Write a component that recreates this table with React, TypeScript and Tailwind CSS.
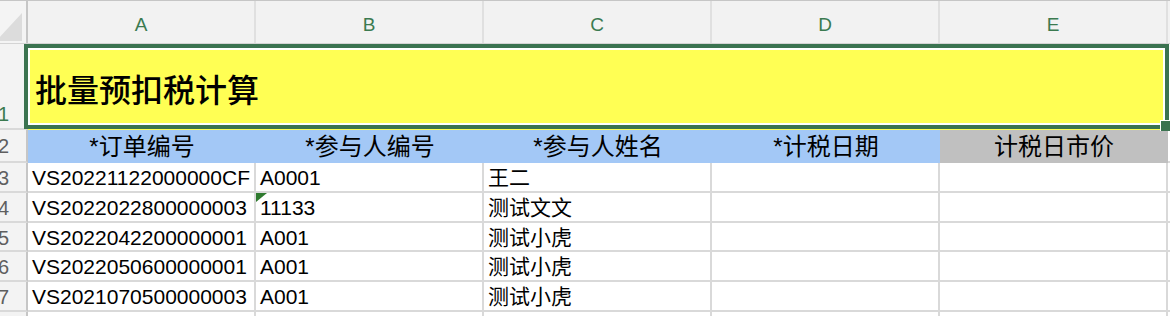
import React from "react";

const cols = ["A", "B", "C", "D", "E"];
const rows: { h: string; cells: string[] }[] = [
  { h: "h-[30px]", cells: ["VS20221122000000CF", "A0001", "王二", "", ""] },
  { h: "h-[30px]", cells: ["VS2022022800000003", "11133", "测试文文", "", ""] },
  { h: "h-[29px]", cells: ["VS2022042200000001", "A001", "测试小虎", "", ""] },
  { h: "h-[30px]", cells: ["VS2022050600000001", "A001", "测试小虎", "", ""] },
  { h: "h-[30px]", cells: ["VS2021070500000003", "A001", "测试小虎", "", ""] },
  { h: "h-[30px]", cells: ["", "", "", "", ""] },
];

export default function App() {
  return (
    <div className="relative w-[1170px] h-[316px] overflow-hidden bg-white font-['Liberation_Sans','Noto_Sans_CJK_SC',sans-serif] text-black">
      {/* column header */}
      <div className="flex h-[44px] border-t border-[#c6c6c6] border-b border-b-[#d4d4d4] bg-[#f2f2f2]">
        <div className="relative w-[28px] shrink-0 border-r-2 border-[#c6c6c6] bg-[#f4f4f4]">
          <svg className="absolute left-0 top-0" width="26" height="43" viewBox="0 0 26 43">
            <polygon points="22,12 22,40 -4,40" fill="#dcdcdc" />
          </svg>
        </div>
        {cols.map((c) => (
          <div
            key={c}
            className="w-[228px] shrink-0 border-r-2 border-[#e0e0e0] flex items-center justify-center text-[19px] leading-none text-[#3b7a50] pt-[4px]"
          >
            {c}
          </div>
        ))}
        <div className="flex-1" />
      </div>

      {/* row 1 */}
      <div className="flex h-[86px]">
        <div className="w-[28px] shrink-0 border-r-2 border-[#c6c6c6] border-b-2 border-b-[#d9d9d9] bg-[#f3f3f3] flex items-end pb-[3px]">
          <span className="-ml-[2px] text-[20px] leading-[22px] text-[#3b7a50]">1</span>
        </div>
        <div className="w-[1140px] shrink-0 bg-[#ffff54] flex items-center pl-[7px] pt-[1px]">
          <span className="text-[32px] font-medium leading-none font-['Noto_Sans_CJK_SC',sans-serif]">
            批量预扣税计算
          </span>
        </div>
        <div className="flex-1" />
      </div>

      {/* row 2 */}
      <div className="flex h-[33px]">
        <div className="w-[28px] shrink-0 border-r-2 border-[#c6c6c6] border-b-2 border-b-[#d9d9d9] bg-[#f3f3f3] flex items-center">
          <span className="-ml-[2px] text-[20px] leading-[22px] text-[#5f5f5f]">2</span>
        </div>
        {["*订单编号", "*参与人编号", "*参与人姓名", "*计税日期"].map((t) => (
          <div key={t} className="w-[228px] shrink-0 bg-[#a3c8f6] flex items-center justify-center">
            <span className="text-[24px] leading-none">{t}</span>
          </div>
        ))}
        <div className="w-[228px] shrink-0 bg-[#c0c0c0] flex items-center justify-center">
          <span className="text-[24px] leading-none">计税日市价</span>
        </div>
        <div className="flex-1 border-b-2 border-[#d9d9d9]" />
      </div>

      {/* data rows */}
      {rows.map((r, i) => (
        <div key={i} className={`flex ${r.h}`}>
          <div className="w-[28px] shrink-0 border-r-2 border-[#c6c6c6] border-b-2 border-b-[#d9d9d9] bg-[#f3f3f3] overflow-hidden">
            <span className="block -ml-[2px] text-[20px] leading-[30px] text-[#5f5f5f]">{i + 3}</span>
          </div>
          {r.cells.map((c, j) => (
            <div
              key={j}
              className="relative w-[228px] shrink-0 border-r-2 border-b-2 border-[#d9d9d9] overflow-hidden whitespace-nowrap pl-[4px] text-[21px] leading-[30px]"
            >
              {i === 1 && j === 1 && (
                <svg className="absolute left-0 top-0" width="11" height="10" viewBox="0 0 11 10">
                  <polygon points="0,0 11,0 0,9" fill="#2f7a2f" />
                </svg>
              )}
              {c}
            </div>
          ))}
          <div className="flex-1 border-b-2 border-[#d9d9d9]" />
        </div>
      ))}

      {/* selection overlay */}
      <div className="absolute left-[24px] top-[44px] w-[1145px] h-[85px] border-4 border-[#3b7350]">
        <div className="absolute inset-0 border-2 border-white" />
      </div>
      <div className="absolute left-[1160px] top-[120px] w-[10px] h-[11px] bg-[#3b7350] border-l border-t border-white" />
    </div>
  );
}
